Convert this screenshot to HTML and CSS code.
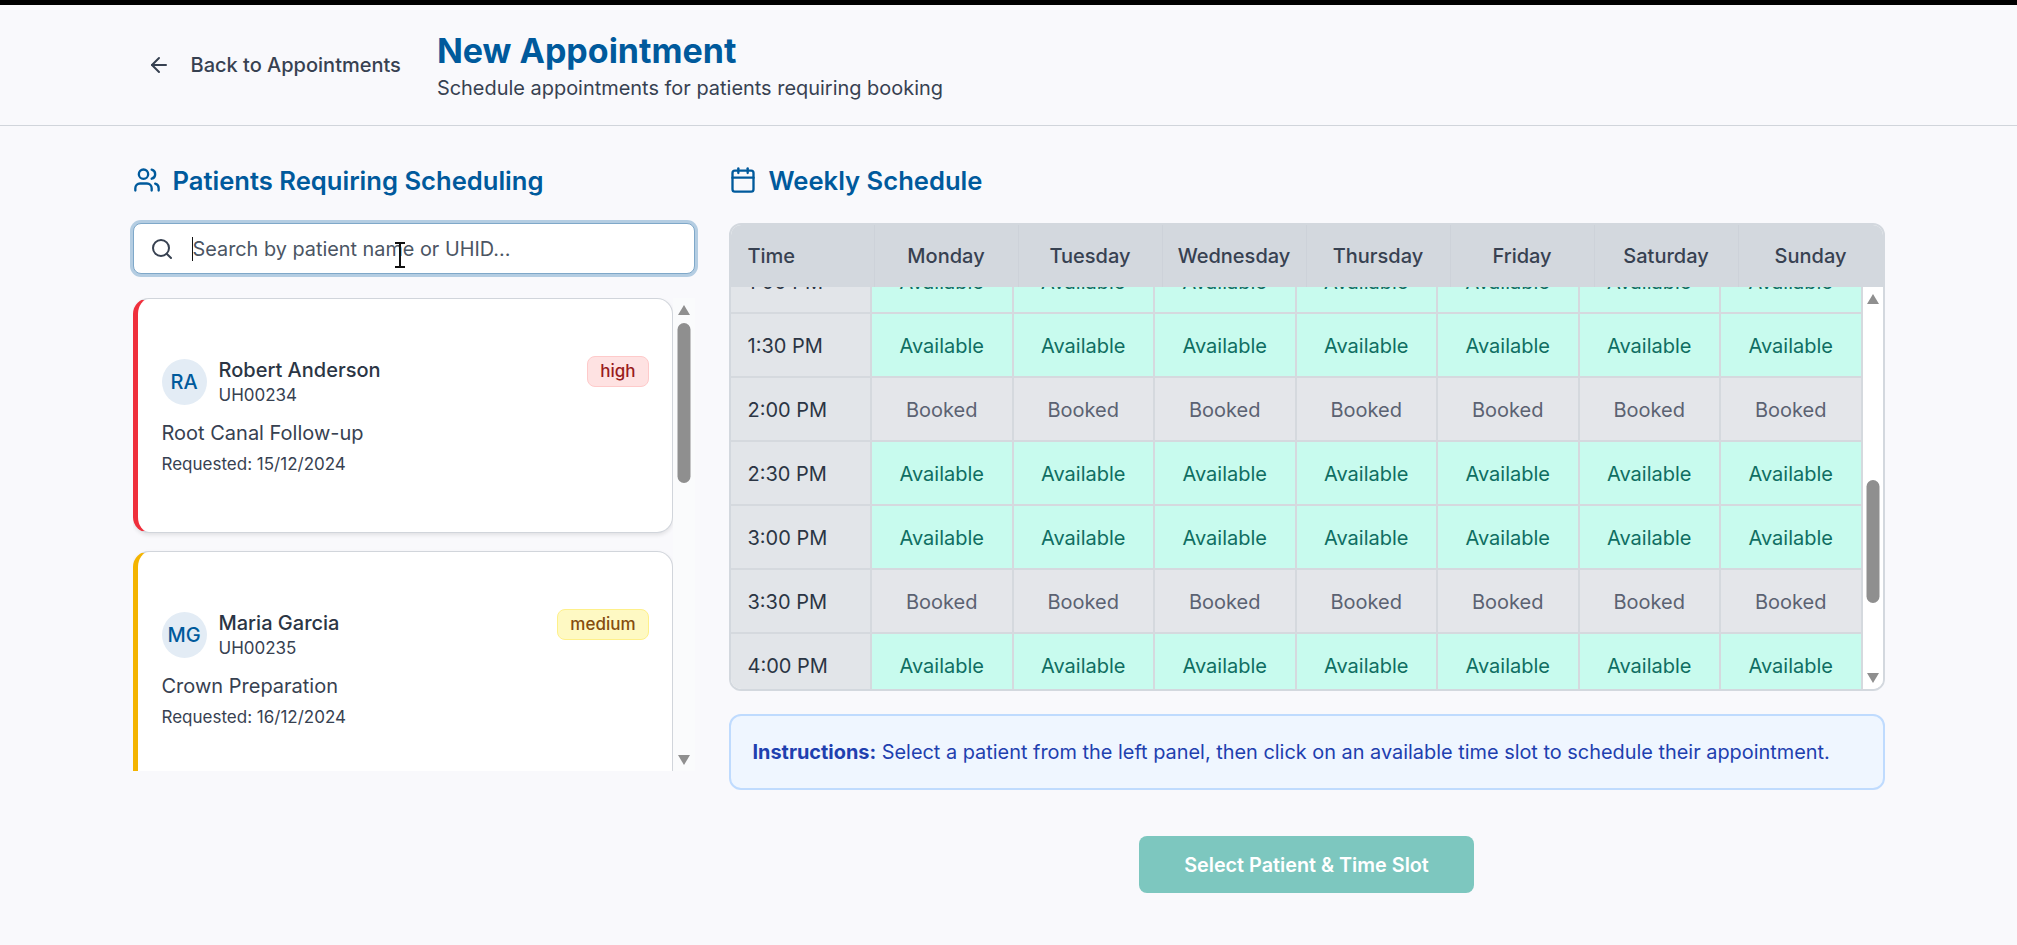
FILE: index.html
```html
<!DOCTYPE html>
<html lang="en">
<head>
  <meta charset="UTF-8">
  <meta name="viewport" content="width=device-width, initial-scale=1">
  <title>New Appointment</title>
  <link rel="stylesheet" href="styles.css">
</head>
<body>
<div class="top-strip"></div>

<header class="page-header">
  <div class="header-inner">
    <a class="back-link" href="#">
      <svg class="icon-back" viewBox="0 0 24 24" fill="none" stroke="currentColor" stroke-width="2" stroke-linecap="round" stroke-linejoin="round"><path d="m12 19-7-7 7-7"/><path d="M19 12H5"/></svg>
      <span>Back to Appointments</span>
    </a>
    <div class="title-block">
      <h1>New Appointment</h1>
      <p>Schedule appointments for patients requiring booking</p>
    </div>
  </div>
</header>

<main class="layout">
  <section class="left-col">
    <h2 class="section-title">
      <svg class="icon-title" viewBox="0 0 24 24" fill="none" stroke="currentColor" stroke-width="2" stroke-linecap="round" stroke-linejoin="round"><path d="M16 21v-2a4 4 0 0 0-4-4H6a4 4 0 0 0-4 4v2"/><circle cx="9" cy="7" r="4"/><path d="M22 21v-2a4 4 0 0 0-3-3.87"/><path d="M16 3.13a4 4 0 0 1 0 7.75"/></svg>
      Patients Requiring Scheduling
    </h2>

    <div class="search-box">
      <svg class="icon-search" viewBox="0 0 24 24" fill="none" stroke="currentColor" stroke-width="2" stroke-linecap="round" stroke-linejoin="round"><circle cx="11" cy="11" r="8"/><path d="m21 21-4.3-4.3"/></svg>
      <span class="caret"></span>
      <span class="search-text">Search by patient name or UHID...</span>
      <svg class="mouse-cursor" viewBox="0 0 14 26" fill="none" stroke="#111" stroke-width="2"><path d="M2 1h10M7 1v24M2 25h10"/></svg>
    </div>

    <div class="patient-panel">
      <div class="patient-list">
        <article class="patient-card high">
          <div class="card-top">
            <div class="avatar">RA</div>
            <div class="who">
              <div class="name">Robert Anderson</div>
              <div class="uhid">UH00234</div>
            </div>
            <span class="badge badge-high">high</span>
          </div>
          <div class="treatment">Root Canal Follow-up</div>
          <div class="requested">Requested: 15/12/2024</div>
        </article>
        <article class="patient-card medium">
          <div class="card-top">
            <div class="avatar">MG</div>
            <div class="who">
              <div class="name">Maria Garcia</div>
              <div class="uhid">UH00235</div>
            </div>
            <span class="badge badge-medium">medium</span>
          </div>
          <div class="treatment">Crown Preparation</div>
          <div class="requested">Requested: 16/12/2024</div>
        </article>
      </div>
      <div class="scrollbar list-bar">
        <span class="arrow-up"></span>
        <span class="thumb"></span>
        <span class="arrow-down"></span>
      </div>
    </div>
  </section>

  <section class="right-col">
    <h2 class="section-title">
      <svg class="icon-title" viewBox="0 0 24 24" fill="none" stroke="currentColor" stroke-width="2" stroke-linecap="round" stroke-linejoin="round"><path d="M8 2v4"/><path d="M16 2v4"/><rect x="3" y="4" width="18" height="18" rx="2"/><path d="M3 10h18"/></svg>
      Weekly Schedule
    </h2>

    <div class="schedule">
      <div class="schedule-head">
        <div class="head-cell head-time">Time</div>
        <div class="head-cell">Monday</div>
        <div class="head-cell">Tuesday</div>
        <div class="head-cell">Wednesday</div>
        <div class="head-cell">Thursday</div>
        <div class="head-cell">Friday</div>
        <div class="head-cell">Saturday</div>
        <div class="head-cell">Sunday</div>
      </div>
      <div class="schedule-body">
        <div class="schedule-rows">
          <div class="row">
            <div class="time">1:00 PM</div>
            <div class="slot free">Available</div><div class="slot free">Available</div><div class="slot free">Available</div><div class="slot free">Available</div><div class="slot free">Available</div><div class="slot free">Available</div><div class="slot free">Available</div>
          </div>
          <div class="row">
            <div class="time">1:30 PM</div>
            <div class="slot free">Available</div><div class="slot free">Available</div><div class="slot free">Available</div><div class="slot free">Available</div><div class="slot free">Available</div><div class="slot free">Available</div><div class="slot free">Available</div>
          </div>
          <div class="row">
            <div class="time">2:00 PM</div>
            <div class="slot taken">Booked</div><div class="slot taken">Booked</div><div class="slot taken">Booked</div><div class="slot taken">Booked</div><div class="slot taken">Booked</div><div class="slot taken">Booked</div><div class="slot taken">Booked</div>
          </div>
          <div class="row">
            <div class="time">2:30 PM</div>
            <div class="slot free">Available</div><div class="slot free">Available</div><div class="slot free">Available</div><div class="slot free">Available</div><div class="slot free">Available</div><div class="slot free">Available</div><div class="slot free">Available</div>
          </div>
          <div class="row">
            <div class="time">3:00 PM</div>
            <div class="slot free">Available</div><div class="slot free">Available</div><div class="slot free">Available</div><div class="slot free">Available</div><div class="slot free">Available</div><div class="slot free">Available</div><div class="slot free">Available</div>
          </div>
          <div class="row">
            <div class="time">3:30 PM</div>
            <div class="slot taken">Booked</div><div class="slot taken">Booked</div><div class="slot taken">Booked</div><div class="slot taken">Booked</div><div class="slot taken">Booked</div><div class="slot taken">Booked</div><div class="slot taken">Booked</div>
          </div>
          <div class="row">
            <div class="time">4:00 PM</div>
            <div class="slot free">Available</div><div class="slot free">Available</div><div class="slot free">Available</div><div class="slot free">Available</div><div class="slot free">Available</div><div class="slot free">Available</div><div class="slot free">Available</div>
          </div>
        </div>
        <div class="scrollbar table-bar">
          <span class="arrow-up"></span>
          <span class="thumb"></span>
          <span class="arrow-down"></span>
        </div>
      </div>
    </div>

    <div class="instructions"><strong>Instructions:</strong> Select a patient from the left panel, then click on an available time slot to schedule their appointment.</div>

    <div class="actions">
      <button class="confirm-btn" disabled>Select Patient &amp; Time Slot</button>
    </div>
  </section>
</main>
</body>
</html>
```

FILE: styles.css
```css
* {
  box-sizing: border-box;
}

body {
  font-family: Inter, 'Noto Sans', sans-serif;
  background: #f9f9fc;
  color: #1f2937;
  margin: 0;
  height: 945px;
  overflow: hidden;
}

.top-strip {
  height: 5px;
  background: #000;
}

.page-header {
  height: 121px;
  border-bottom: 1px solid #d1d5db;
}

.header-inner {
  width: 1752px;
  margin: 0 auto;
  height: 100%;
  display: flex;
  align-items: center;
  gap: 22px;
}

.back-link {
  display: flex;
  align-items: center;
  gap: 20px;
  padding: 0 14px;
  color: #374151;
  font-size: 20px;
  font-weight: 500;
  text-decoration: none;
}

.icon-back {
  width: 24px;
  height: 24px;
  flex: none;
}

.title-block h1 {
  margin: 0;
  color: #005a9c;
  font-size: 34px;
  line-height: 46px;
  font-weight: 700;
}

.title-block p {
  margin: 0;
  color: #374151;
  font-size: 19.95px;
  line-height: 28px;
}

.layout {
  width: 1752px;
  margin: 0 auto;
  padding-top: 37px;
  display: grid;
  grid-template-columns: 562px 1156px;
  gap: 34px;
}

.section-title {
  display: flex;
  align-items: center;
  gap: 12px;
  margin: 0;
  height: 34px;
  color: #005a9c;
  font-size: 25.6px;
  font-weight: 600;
}

.icon-title {
  width: 28px;
  height: 28px;
  flex: none;
}

/* search */
.search-box {
  position: relative;
  display: flex;
  align-items: center;
  height: 51px;
  margin-top: 26px;
  padding-left: 16px;
  background: #fff;
  border: 1px solid #7fa8c9;
  border-radius: 8px;
  box-shadow: 0 0 0 3px #b4cde2;
  font-size: 19.85px;
  color: #4b5563;
}

.icon-search {
  width: 24px;
  height: 24px;
  flex: none;
  color: #374151;
  margin-right: 18px;
}

.caret {
  width: 1px;
  height: 24px;
  background: #111;
}

.mouse-cursor {
  position: absolute;
  left: 259px;
  top: 18px;
  width: 14px;
  height: 26px;
}

/* patient list */
.patient-panel {
  display: flex;
  height: 473px;
  margin-top: 24px;
  overflow: hidden;
}

.patient-list {
  width: 540px;
  flex: none;
}

.patient-card {
  height: 235px;
  margin-bottom: 18px;
  padding: 60px 23px 0 24px;
  background: #fff;
  border: 1px solid #d1d5db;
  border-left: 5px solid #ef2f3c;
  border-radius: 16px;
  box-shadow: 0 2px 4px rgba(0, 0, 0, 0.1);
}

.patient-card.medium {
  border-left-color: #f4b400;
}

.card-top {
  display: flex;
  align-items: flex-start;
}

.avatar {
  width: 45px;
  height: 46px;
  flex: none;
  display: flex;
  align-items: center;
  justify-content: center;
  border-radius: 50%;
  background: #e3ecf5;
  color: #005a9c;
  font-size: 20px;
  font-weight: 500;
}

.who {
  flex: 1;
  margin: -2px 0 0 12px;
}

.name {
  font-size: 20px;
  line-height: 26px;
  font-weight: 500;
  color: #2b3544;
}

.uhid {
  font-size: 17px;
  line-height: 24px;
  color: #374151;
}

.badge {
  margin-top: -3px;
  padding: 0 12px;
  height: 31px;
  line-height: 29px;
  border-radius: 8px;
  border: 1px solid;
  font-size: 17px;
  font-weight: 500;
}

.badge-high {
  background: #fee2e2;
  border-color: #fecaca;
  color: #991b1b;
}

.badge-medium {
  background: #fef9c3;
  border-color: #fef08a;
  color: #854d0e;
}

.treatment {
  margin-top: 12px;
  font-size: 20px;
  line-height: 28px;
  color: #374151;
}

.requested {
  margin-top: 5px;
  font-size: 17px;
  line-height: 24px;
  color: #374151;
}

/* fake classic scrollbar */
.scrollbar {
  position: relative;
  flex: none;
}

.scrollbar .thumb {
  position: absolute;
  background: #8f8f8f;
  border-radius: 7px;
  left: 50%;
  transform: translateX(-50%);
  width: 13px;
}

.arrow-up,
.arrow-down {
  position: absolute;
  left: 50%;
  transform: translateX(-50%);
  width: 0;
  height: 0;
  border-left: 6.5px solid transparent;
  border-right: 6.5px solid transparent;
}

.arrow-up {
  border-bottom: 10px solid #8f8f8f;
  top: 7px;
}

.arrow-down {
  border-top: 10px solid #8f8f8f;
  bottom: 6px;
}

.list-bar {
  width: 22px;
  background: #fafbfc;
}

.list-bar .thumb {
  top: 25px;
  height: 160px;
}

/* schedule grid */
.schedule {
  height: 468px;
  margin-top: 26px;
  display: flex;
  flex-direction: column;
  background: #fff;
  border: 2px solid #d3d8de;
  border-radius: 12px;
  overflow: hidden;
}

.schedule-head {
  height: 62px;
  flex: none;
  display: grid;
  grid-template-columns: repeat(8, 1fr);
  background: #d3d8de;
}

.head-cell {
  display: flex;
  align-items: center;
  justify-content: center;
  border-right: 1px solid #cdd2d9;
  font-size: 20px;
  font-weight: 500;
  color: #374151;
}

.head-cell:last-child {
  border-right: none;
}

.head-time {
  justify-content: flex-start;
  padding-left: 17px;
}

.schedule-body {
  flex: 1;
  display: flex;
  overflow: hidden;
}

.schedule-rows {
  flex: 1;
  margin-top: -37px;
}

.row {
  height: 64px;
  display: grid;
  grid-template-columns: repeat(8, 1fr);
  border-bottom: 2px solid #d5d9de;
}

.time,
.slot {
  display: flex;
  align-items: center;
  padding-top: 2px;
  font-size: 20px;
  border-right: 2px solid #d5d9de;
}

.time {
  padding-left: 17px;
  background: #e2e5e9;
  color: #2b3544;
  font-weight: 400;
}

.slot {
  justify-content: center;
}

.free {
  background: #c8fbee;
  color: #0f6e62;
}

.taken {
  background: #e4e6ea;
  color: #5b6272;
}

.table-bar {
  width: 20px;
  background: #fff;
}

.table-bar .thumb {
  top: 193px;
  height: 123px;
}

/* below the grid */
.instructions {
  height: 76px;
  margin-top: 23px;
  padding: 0 22px;
  display: flex;
  align-items: center;
  white-space: pre-wrap;
  background: #eff6ff;
  border: 2px solid #bfdbfe;
  border-radius: 12px;
  font-size: 19.9px;
  color: #1e40af;
}

.actions {
  margin-top: 46px;
  display: flex;
  justify-content: center;
}

.confirm-btn {
  width: 335px;
  height: 57px;
  padding: 0;
  border: none;
  border-radius: 8px;
  background: #7dc7bf;
  color: #fff;
  font-family: inherit;
  font-size: 19.8px;
  font-weight: 600;
}
```
